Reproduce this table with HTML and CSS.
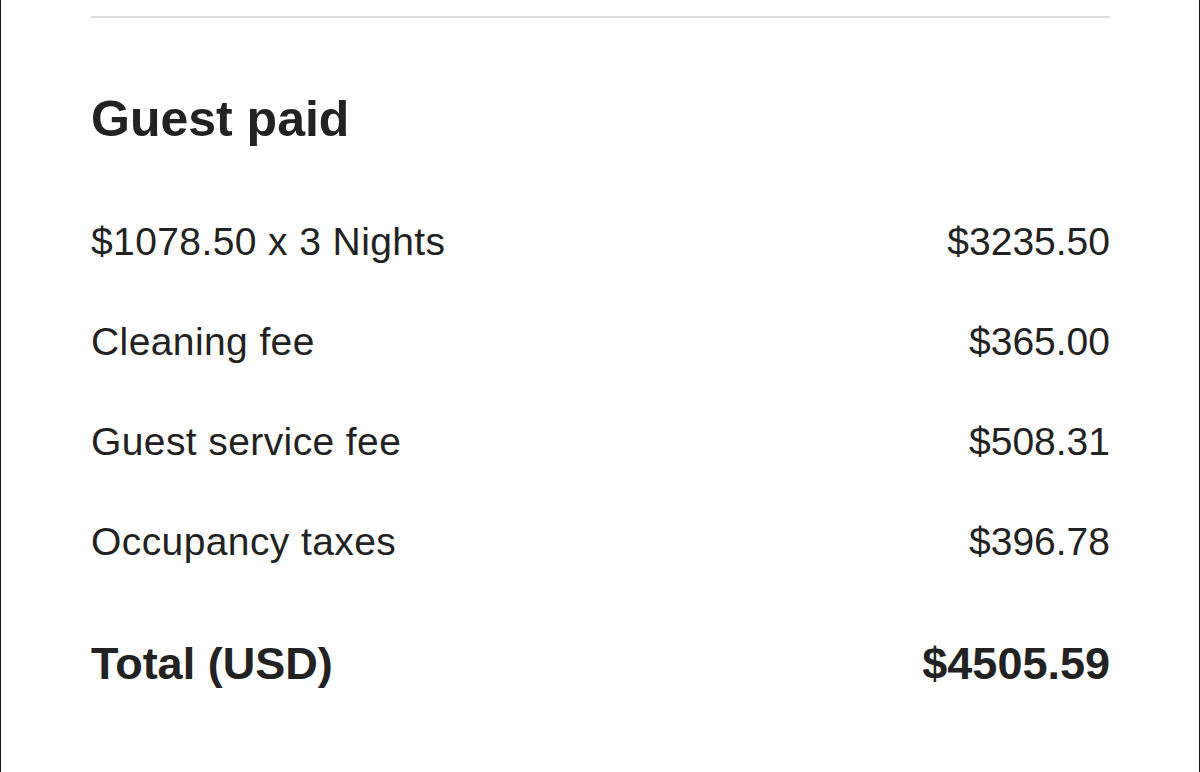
FILE: index.html
```html
<!DOCTYPE html>
<html lang="en">
<head>
  <meta charset="UTF-8">
  <meta name="viewport" content="width=device-width, initial-scale=1.0">
  <title>Guest paid</title>
<link rel="stylesheet" href="styles.css">
</head>
<body>
  <div class="page">
    <hr class="divider">
    <h2 class="title">Guest paid</h2>

    <div class="row">
      <span class="label">$1078.50 x 3 Nights</span>
      <span class="amount">$3235.50</span>
    </div>
    <div class="row">
      <span class="label">Cleaning fee</span>
      <span class="amount">$365.00</span>
    </div>
    <div class="row">
      <span class="label">Guest service fee</span>
      <span class="amount">$508.31</span>
    </div>
    <div class="row">
      <span class="label">Occupancy taxes</span>
      <span class="amount">$396.78</span>
    </div>

    <div class="row total">
      <span>Total (USD)</span>
      <span>$4505.59</span>
    </div>
  </div>
</body>
</html>
```

FILE: styles.css
```css
html, body {
  margin: 0;
  height: 100%;
  background: #fff;
}
body {
  font-family: "Liberation Sans", Arial, sans-serif;
  color: #222;
}
.page {
  box-sizing: border-box;
  height: 100%;
  border-left: 1px solid #111;
  border-right: 1px solid #111;
  padding: 0 89px 0 90px;
  overflow: hidden;
}
.divider {
  margin: 16px 0 0;
  border: 0;
  height: 2px;
  background: #dedede;
}
.title {
  margin: 71px 0 0;
  font-size: 50px;
  line-height: 60px;
  font-weight: bold;
}

/* fee rows */
.row {
  display: flex;
  justify-content: space-between;
  align-items: center;
  height: 100px;
  font-size: 39px;
}
.row .label {
  letter-spacing: 0.4px;
}
.title + .row {
  margin-top: 43px;
}
.total {
  margin-top: 22px;
  font-size: 45px;
  font-weight: bold;
}
```
